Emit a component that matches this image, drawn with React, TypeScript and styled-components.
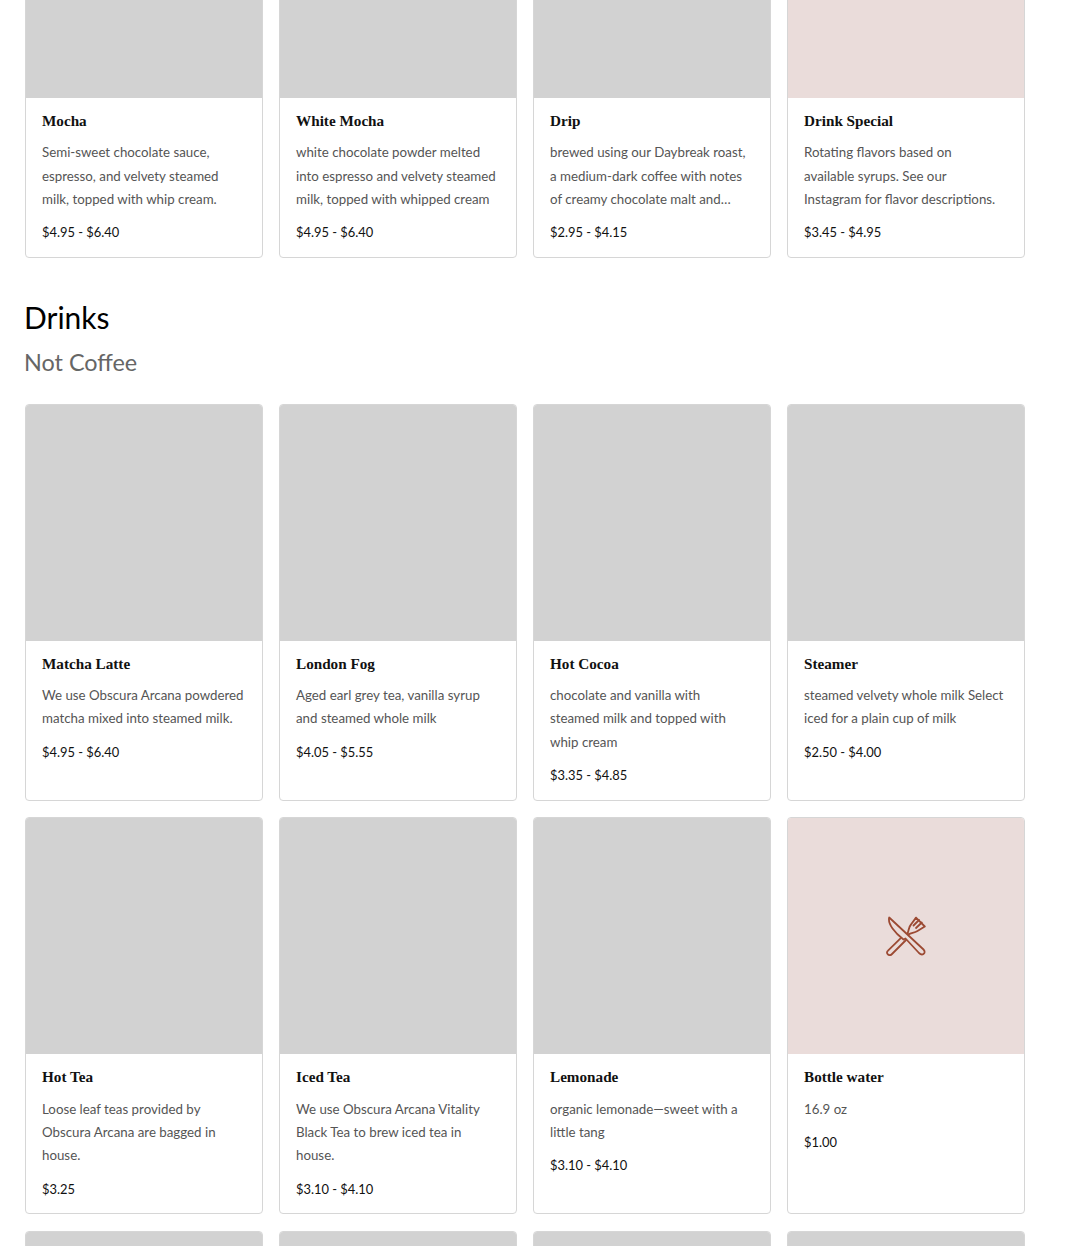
import React from 'react'
import styled, { createGlobalStyle } from 'styled-components'

const GlobalStyle = createGlobalStyle`
  html, body {
    margin: 0;
    padding: 0;
    height: 100%;
    overflow: hidden;
    background: #fff;
  }
  body {
    font-family: Lato, "Open Sans", sans-serif;
  }
`

const Viewport = styled.div`
  height: 1246px;
  overflow: hidden;
`

const Page = styled.main`
  margin-top: -139px;
  padding: 0 45px 0 25px;
`

const Grid = styled.div`
  display: grid;
  grid-template-columns: repeat(4, 238px);
  gap: 16.5px 16px;
`

const Heading = styled.h2`
  margin: 38.6px 0 0 -1px;
  font-size: 30px;
  line-height: 40px;
  font-weight: 400;
  color: #000;
`

const SubHeading = styled.h3`
  margin: 9px 0 26px -1px;
  font-size: 23.4px;
  line-height: 32px;
  font-weight: 400;
  color: #666;
`

const Card = styled.article`
  display: flex;
  flex-direction: column;
  border: 1px solid #d6d6d6;
  border-radius: 4px;
  overflow: hidden;
  background: #fff;
`

const Photo = styled.div<{ $empty?: boolean }>`
  display: flex;
  align-items: center;
  justify-content: center;
  height: 236px;
  background: ${(p) => (p.$empty ? '#eadcda' : '#d2d2d2')};
`

const Body = styled.div`
  padding: 12px 16px 12.5px;
`

const Title = styled.h4`
  margin: 0 0 9.3px;
  font-family: "Liberation Serif", serif;
  font-size: 15.2px;
  line-height: 22px;
  font-weight: 700;
  color: #111;
`

const Description = styled.p`
  margin: 0 0 9.7px;
  max-width: 201.5px;
  font-size: 13.3px;
  line-height: 23.4px;
  color: #555;
`

const Price = styled.div`
  font-size: 12.9px;
  line-height: 23.4px;
  color: #111;
`

const KnifeFork = () => (
  <svg width="40" height="40" viewBox="0 0 40 40" fill="none" stroke="#9c4a33" strokeWidth="1.8" strokeLinejoin="round" strokeLinecap="round">
    <path d="M3.2 1.5L37.5 33.5C39 35 39 37 37.5 38C36 39 34.5 38.5 33 37L19.5 22.5L17.5 23.5C9 17 1.5 8 3.2 1.5Z" />
    <path d="M14.5 22.3L2 34.6C0.5 36 0.8 37.6 2 38.5C3.2 39.4 4.8 39.2 6 38L20 24" />
    <path d="M21.5 17.5C23 14.5 22.5 11 25 8.5L30 1.6L38.8 10.5L31.5 15C28 17.2 25 16.5 22.5 18.5" />
    <path d="M27.5 9.5L33 4M30 12L35.8 6.5" />
  </svg>
)

type Item = { name: string; desc: string; price: string; empty?: boolean; icon?: boolean }

const coffee: Item[] = [
  { name: 'Mocha', desc: 'Semi-sweet chocolate sauce, espresso, and velvety steamed milk, topped with whip cream.', price: '$4.95 - $6.40' },
  { name: 'White Mocha', desc: 'white chocolate powder melted into espresso and velvety steamed milk, topped with whipped cream', price: '$4.95 - $6.40' },
  { name: 'Drip', desc: 'brewed using our Daybreak roast, a medium-dark coffee with notes of creamy chocolate malt and…', price: '$2.95 - $4.15' },
  { name: 'Drink Special', desc: 'Rotating flavors based on available\u00a0syrups. See our Instagram for flavor descriptions.', price: '$3.45 - $4.95', empty: true },
]

const notCoffee: Item[] = [
  { name: 'Matcha Latte', desc: 'We use Obscura Arcana powdered matcha mixed into steamed milk.', price: '$4.95 - $6.40' },
  { name: 'London Fog', desc: 'Aged earl grey tea, vanilla syrup and steamed whole milk', price: '$4.05 - $5.55' },
  { name: 'Hot Cocoa', desc: 'chocolate and vanilla with steamed milk and topped with whip cream', price: '$3.35 - $4.85' },
  { name: 'Steamer', desc: 'steamed velvety whole milk Select iced for a plain cup of milk', price: '$2.50 - $4.00' },
  { name: 'Hot Tea', desc: 'Loose leaf teas provided by Obscura Arcana are bagged in house.', price: '$3.25' },
  { name: 'Iced Tea', desc: 'We use Obscura Arcana Vitality Black Tea to brew iced tea in house.', price: '$3.10 - $4.10' },
  { name: 'Lemonade', desc: 'organic lemonade—sweet with a little tang', price: '$3.10 - $4.10' },
  { name: 'Bottle water', desc: '16.9 oz', price: '$1.00', empty: true, icon: true },
]

const MenuCard = ({ item }: { item: Item }) => (
  <Card>
    <Photo $empty={item.empty}>{item.icon && <KnifeFork />}</Photo>
    <Body>
      <Title>{item.name}</Title>
      <Description>{item.desc}</Description>
      <Price>{item.price}</Price>
    </Body>
  </Card>
)

const PhotoOnlyCard = () => (
  <Card>
    <Photo />
  </Card>
)

const App = () => (
  <Viewport>
    <GlobalStyle />
    <Page>
      <Grid>
        {coffee.map((item) => (
          <MenuCard key={item.name} item={item} />
        ))}
      </Grid>
      <Heading>Drinks</Heading>
      <SubHeading>Not Coffee</SubHeading>
      <Grid>
        {notCoffee.map((item) => (
          <MenuCard key={item.name} item={item} />
        ))}
        {[0, 1, 2, 3].map((n) => (
          <PhotoOnlyCard key={n} />
        ))}
      </Grid>
    </Page>
  </Viewport>
)

export default App
